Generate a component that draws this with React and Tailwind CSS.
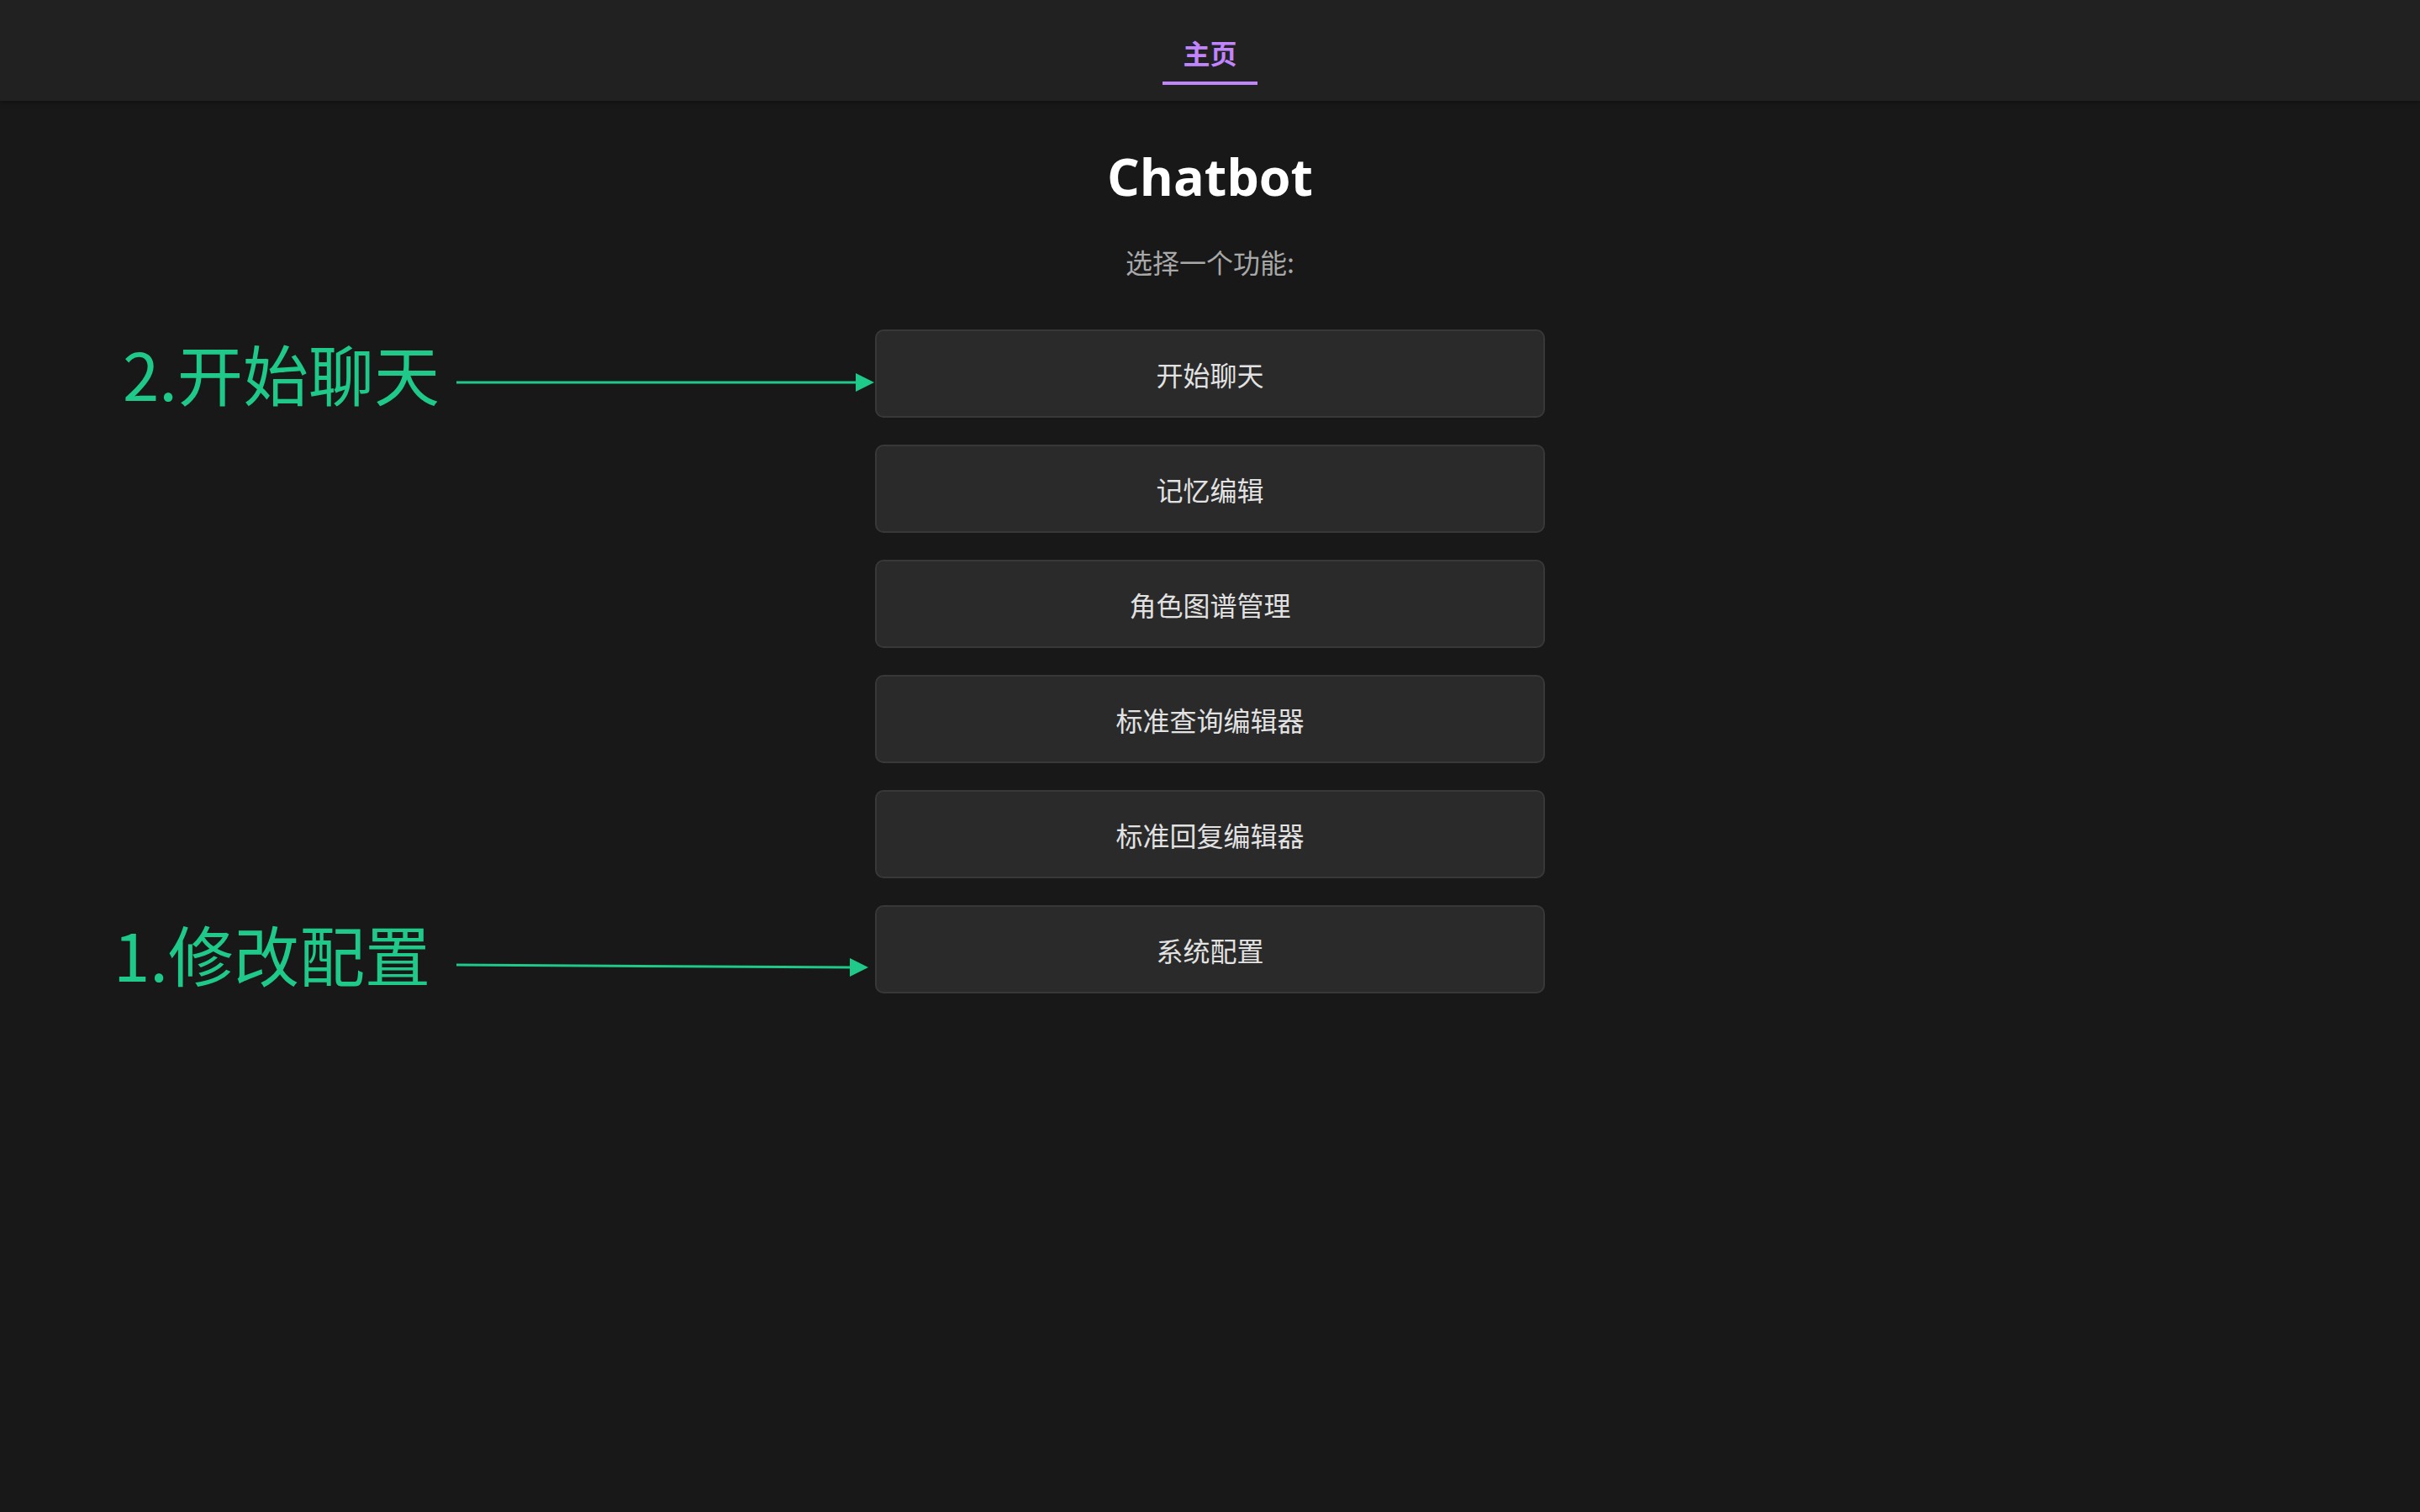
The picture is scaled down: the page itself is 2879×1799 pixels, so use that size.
import React from "react";

const items = ["开始聊天", "记忆编辑", "角色图谱管理", "标准查询编辑器", "标准回复编辑器", "系统配置"];

export default function App() {
  const cjk = { fontFamily: '"Noto Sans CJK SC", "Noto Sans", sans-serif' };
  return (
    <div className="relative min-h-screen w-full bg-[#181818]" style={cjk}>
      <header className="flex h-[120px] items-end justify-center bg-[#212121] shadow-[0_2px_6px_rgba(0,0,0,0.35)]">
        <div className="mb-[19px] border-b-4 border-[#c084fc] px-[24px] pb-[15px]">
          <span className="block text-[32px] font-bold leading-[40px] text-[#c084fc]">主页</span>
        </div>
      </header>

      <main className="flex flex-col items-center pt-[51px]">
        <h1
          className="text-[61px] font-bold leading-[77px] text-white"
          style={{ fontFamily: '"Open Sans", "Noto Sans", sans-serif' }}
        >
          Chatbot
        </h1>
        <p className="mt-[43px] text-[32px] leading-[40px] text-[#a8a8a8]">选择一个功能:</p>
        <div className="mt-[61px] flex w-[797px] flex-col gap-[32px]">
          {items.map((t) => (
            <button
              key={t}
              className="flex h-[105px] w-full items-center justify-center rounded-[10px] border-2 border-[#383838] bg-[#2a2a2a] text-[32px] text-[#e2e2e2]"
              style={cjk}
            >
              {t}
            </button>
          ))}
        </div>
      </main>

      <div className="absolute left-[146px] top-[401px] text-[78px] leading-[84px] text-[#1ec98a]">2.开始聊天</div>
      <div className="absolute left-[135px] top-[1092px] text-[78px] leading-[84px] text-[#1ec98a]">1.修改配置</div>

      <svg className="pointer-events-none absolute left-0 top-0" width="2879" height="1799">
        <line x1="543" y1="455" x2="1020" y2="455" stroke="#1ec98a" strokeWidth="3" />
        <polygon points="1040,455 1018,444 1018,466" fill="#1ec98a" />
        <line x1="543" y1="1148" x2="1013" y2="1151" stroke="#1ec98a" strokeWidth="3" />
        <polygon points="1033,1151 1011,1140 1011,1162" fill="#1ec98a" />
      </svg>
    </div>
  );
}
